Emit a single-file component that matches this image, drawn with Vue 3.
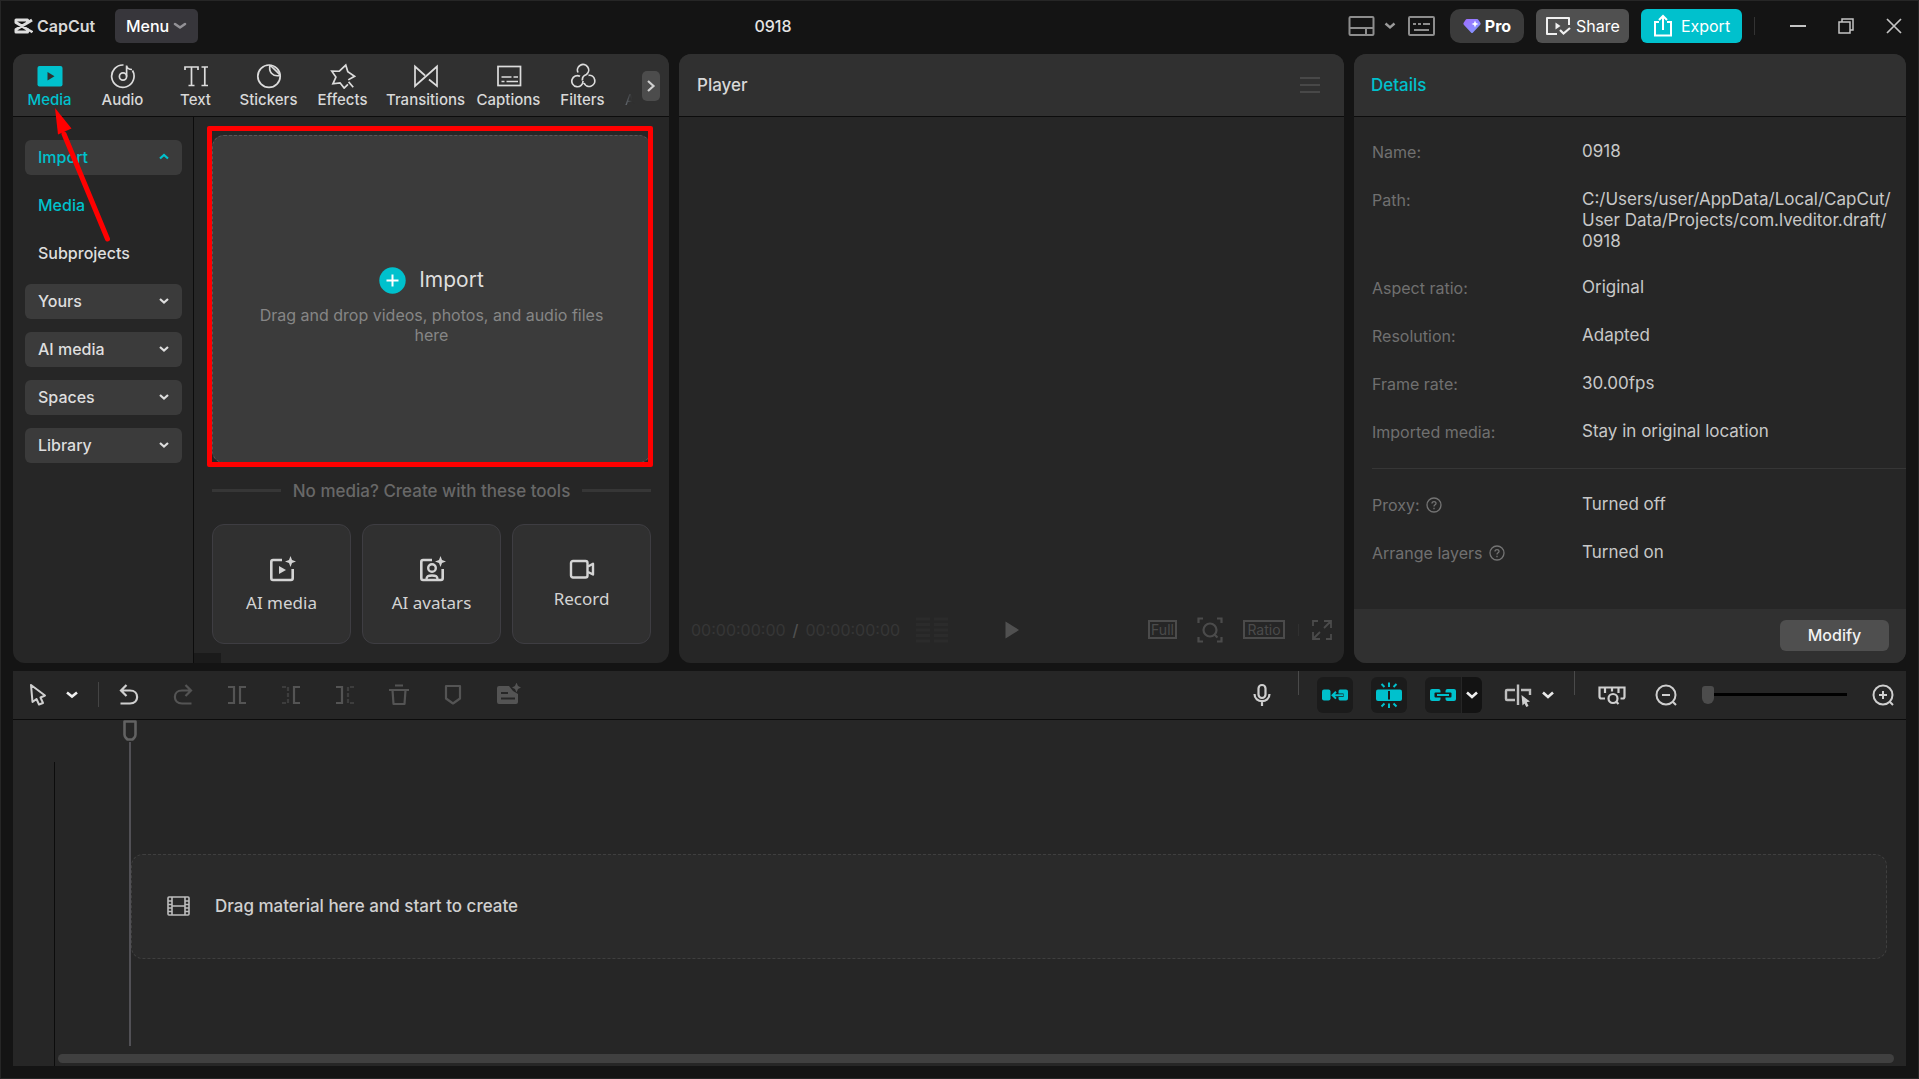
<script setup>
import { ref } from 'vue'

const projectName = '0918'
const activeTab = ref('Media')
const zoomLevel = ref(0)

const tabs = ['Media', 'Audio', 'Text', 'Stickers', 'Effects', 'Transitions', 'Captions', 'Filters']

const sideItems = [
  { label: 'Import', kind: 'group', open: true },
  { label: 'Media', kind: 'link', active: true },
  { label: 'Subprojects', kind: 'link' },
  { label: 'Yours', kind: 'group' },
  { label: 'AI media', kind: 'group' },
  { label: 'Spaces', kind: 'group' },
  { label: 'Library', kind: 'group' }
]

const details = [
  { label: 'Name:', value: '0918' },
  { label: 'Path:', value: 'C:/Users/user/AppData/Local/CapCut/\nUser Data/Projects/com.lveditor.draft/\n0918' },
  { label: 'Aspect ratio:', value: 'Original' },
  { label: 'Resolution:', value: 'Adapted' },
  { label: 'Frame rate:', value: '30.00fps' },
  { label: 'Imported media:', value: 'Stay in original location' }
]

const options = [
  { label: 'Proxy:', value: 'Turned off' },
  { label: 'Arrange layers', value: 'Turned on' }
]
</script>

<template>
  <div class="app">
    <header class="titlebar">
      <div class="brand">
        <svg width="20" height="16" viewBox="0 0 20 16" fill="none" stroke="#dedede" stroke-width="3">
          <path d="M19 2 L15 4.500 L3 11.500 V14 H14.500 V11.500 L3 4.500 V2 H14.500 V4.500" stroke-linejoin="round" />
          <path d="M14 11 L19.500 14.200" stroke-width="2.400" />
        </svg>
        <span>CapCut</span>
      </div>
      <button class="menu-btn">Menu
        <svg width="14" height="8" viewBox="0 0 14 8" fill="none" stroke="#929196" stroke-width="2.600" stroke-linecap="round" stroke-linejoin="round"><path d="M2 2 L7 5.500 L12 2" /></svg>
      </button>
      <h1>{{ projectName }}</h1>
      <div class="title-actions">
        <button class="plain layout-btn" aria-label="Layout">
          <svg width="27" height="22" viewBox="0 0 27 22" fill="none" stroke="#8d8d8d" stroke-width="2"><rect x="1.500" y="2" width="24" height="18" rx="1" /><path d="M1.500 13 H25.500 M18 13 V20" /></svg>
          <svg width="12" height="8" viewBox="0 0 12 8" fill="none" stroke="#9a9a9a" stroke-width="2.400"><path d="M1.500 1.500 L6 5.500 L10.500 1.500" /></svg>
        </button>
        <button class="plain keys-btn" aria-label="Shortcuts">
          <svg width="27" height="22" viewBox="0 0 27 22" fill="none" stroke="#8d8d8d" stroke-width="2"><rect x="1" y="2" width="25" height="18" rx="1" /><path d="M5 9 H8 M10 9 H13 M15 9 H22 M6 15 H21" /></svg>
        </button>
        <button class="pill pro">
          <svg width="18" height="16" viewBox="0 0 18 16">
            <defs><linearGradient id="gem" x1="0" x2="1" y1="0" y2="1"><stop offset="0" stop-color="#a06bff" /><stop offset="1" stop-color="#7f9dff" /></linearGradient></defs>
            <path d="M4 1 H14 Q15 1 15.500 2 L17.500 5 Q18 6 17 7 L10 14.500 Q9 15.500 8 14.500 L1 7 Q0 6 0.500 5 L2.500 2 Q3 1 4 1Z" fill="url(#gem)" />
            <path d="M12 2.500 L13 5 L15.500 6 L13 7 L12 9.500 L11 7 L8.500 6 L11 5Z" fill="#fff" />
          </svg>
          <b>Pro</b>
        </button>
        <button class="pill share">
          <svg width="26" height="20" viewBox="0 0 26 20" fill="none" stroke="#f0f0f0" stroke-width="2"><path d="M12 18 H2 V2 H24 V9" stroke-linejoin="round" /><path d="M10.500 6.500 L15.500 10 L10.500 13.500Z" fill="#f0f0f0" stroke="none" /><path d="M15 14 L18.500 17.500 L25 12" stroke-width="2.200" /></svg>
          Share
        </button>
        <button class="pill export">
          <svg width="20" height="23" viewBox="0 0 20 23" fill="none" stroke="#fff" stroke-width="2"><path d="M6 8 H2 V21.500 H18 V8 H14" /><path d="M10 16 V2.500 M6 6 L10 2 L14 6" /></svg>
          Export
        </button>
        <i class="split"></i>
        <button class="plain win" aria-label="Minimize"><svg width="16" height="16" viewBox="0 0 16 16" stroke="#c4c4c4" stroke-width="2"><path d="M0 8 H16" /></svg></button>
        <button class="plain win" aria-label="Restore"><svg width="16" height="16" viewBox="0 0 16 16" fill="none" stroke="#c4c4c4" stroke-width="1.500"><rect x="1" y="4" width="11" height="11" /><path d="M4 4 V1 H15 V12 H12" /></svg></button>
        <button class="plain win" aria-label="Close"><svg width="16" height="16" viewBox="0 0 16 16" stroke="#c4c4c4" stroke-width="1.700"><path d="M1 1 L15 15 M15 1 L1 15" /></svg></button>
      </div>
    </header>

    <main class="panels">
      <section class="panel library">
        <nav class="tabs">
          <button v-for="tab in tabs" :key="tab" class="tab" :class="[tab.toLowerCase(), { active: tab === activeTab }]" @click="activeTab = tab">
            <svg v-if="tab === 'Media'" width="26" height="26" viewBox="0 0 26 26"><rect x="0.500" y="3" width="25" height="20.500" rx="2" fill="#00c1cd" /><path d="M10.500 9 L17.500 13.200 L10.500 17.500Z" fill="#303030" /></svg>
            <svg v-else-if="tab === 'Audio'" width="26" height="26" viewBox="0 0 26 26" class="line"><path d="M13.500 2 A11.200 11.200 0 1 0 22.500 7.500" /><circle cx="13" cy="13.500" r="3.600" /><path d="M16.600 13.500 V2.500 C17 5.500 19 6.500 22 6.500" /></svg>
            <svg v-else-if="tab === 'Text'" width="26" height="26" viewBox="0 0 26 26" class="line"><path d="M2 7 V4 H15 V7 M8.500 4 V22.500 M5.500 22.500 H11.500 M18.500 4 H25 M21.800 4 V22.500 M18.500 22.500 H25" /></svg>
            <svg v-else-if="tab === 'Stickers'" width="26" height="26" viewBox="0 0 26 26" class="line"><circle cx="13" cy="13.200" r="11.200" /><path d="M14 2 C12.500 8.500 16 14 24 12.500 M14.500 2.500 C18 6 21 8.500 24 12" /></svg>
            <svg v-else-if="tab === 'Effects'" width="26" height="26" viewBox="0 0 26 26" class="line"><path d="M18.500 21 L15 25 L10.500 20 L3.500 21.500 L6 14.500 L1.500 9 L9 8.500 L15 2 L17.500 8.500 L24.500 12.500 L18.500 16.500 M19 18.500 L24 23.500" transform="rotate(4 13 13)" /></svg>
            <svg v-else-if="tab === 'Transitions'" width="26" height="26" viewBox="0 0 26 26" class="line"><path d="M12 12.500 L2 3.500 V23 L24 3.500 V23 L16 16.500" /></svg>
            <svg v-else-if="tab === 'Captions'" width="26" height="26" viewBox="0 0 26 26" class="line"><rect x="2" y="3.500" width="22.500" height="19" /><path d="M5.500 14 H15.500 M17.500 14 H22 M5.500 18.500 H8.500 M10.500 18.500 H22" /></svg>
            <svg v-else width="26" height="26" viewBox="0 0 26 26" class="line"><path d="M8 9.500 A5.600 5.600 0 1 1 16.500 11.500 C13.500 12.500 12 14.500 12.500 17.500 M10 13.200 A5.600 5.600 0 1 0 13 18 M18.500 12.300 A5.600 5.600 0 1 1 14 20" /></svg>
            <span>{{ tab }}</span>
          </button>
          <span class="next-tab">A</span>
          <button class="tabs-next" aria-label="More tabs"><svg width="10" height="14" viewBox="0 0 10 14" fill="none" stroke="#d0d0d0" stroke-width="2.200"><path d="M2 2 L7.500 7 L2 12" /></svg></button>
        </nav>
        <div class="library-body">
          <aside class="side">
            <template v-for="item in sideItems" :key="item.label + item.kind">
              <button v-if="item.kind === 'group'" class="side-row group" :class="{ active: item.open }">
                {{ item.label }}
                <svg width="10" height="8" viewBox="0 0 10 8" fill="none" stroke="currentColor" stroke-width="2.200"><path :d="item.open ? 'M1 5.500 L5 2 L9 5.500' : 'M1 2 L5 5.500 L9 2'" /></svg>
              </button>
              <a v-else href="#" class="side-row" :class="{ active: item.active }">{{ item.label }}</a>
            </template>
          </aside>
          <div class="media-area">
            <div class="dropzone">
              <button class="plain import-btn">
                <svg width="27" height="27" viewBox="0 0 27 27"><circle cx="13.500" cy="13.500" r="13.200" fill="#00c1cd" /><path d="M13.500 7.500 V19.500 M7.500 13.500 H19.500" stroke="#fff" stroke-width="2" /></svg>
                Import
              </button>
              <p>Drag and drop videos, photos, and audio files<br>here</p>
              <div class="highlight"></div>
            </div>
            <div class="or"><i></i><span>No media? Create with these tools</span><i></i></div>
            <div class="cards">
              <button class="card">
                <svg width="28" height="28" viewBox="0 0 28 28" fill="none" stroke="#d4d4d4" stroke-width="2.600"><path d="M14 5 H5 Q3.300 5 3.300 6.700 V23.300 Q3.300 25 5 25 H23 Q24.700 25 24.700 23.300 V14" /><path d="M11 11 L18 15 L11 19Z" fill="#d4d4d4" stroke="none" /><path d="M22.500 1 L24 5 L28 6.500 L24 8 L22.500 12 L21 8 L17 6.500 L21 5Z" fill="#d4d4d4" stroke="none" /></svg>
                AI media
              </button>
              <button class="card">
                <svg width="28" height="28" viewBox="0 0 28 28" fill="none" stroke="#d4d4d4" stroke-width="2.600"><path d="M14 5 H5 Q3.300 5 3.300 6.700 V23.300 Q3.300 25 5 25 H23 Q24.700 25 24.700 23.300 V14" /><circle cx="14" cy="13" r="3.800" stroke-width="2.400" /><path d="M8.500 24.500 C8.500 21 10 20.500 14 20.500 S19.500 21 19.500 24.500" stroke-width="2.400" /><path d="M22.500 1 L24 5 L28 6.500 L24 8 L22.500 12 L21 8 L17 6.500 L21 5Z" fill="#d4d4d4" stroke="none" /></svg>
                AI avatars
              </button>
              <button class="card">
                <svg width="26" height="20" viewBox="0 0 26 20" fill="none" stroke="#d4d4d4" stroke-width="2.400"><rect x="2" y="2" width="16.500" height="16.500" rx="2" /><path d="M19 7.500 L24 4.800 V15.500 L19 13" stroke-linejoin="round" /></svg>
                Record
              </button>
            </div>
            <i class="hscroll"></i>
          </div>
        </div>
        <svg class="arrow" width="64" height="140" viewBox="0 0 64 140"><path d="M59.500 134 L16 29" stroke="#ff0000" stroke-width="5" stroke-linecap="round" /><path d="M7 3 L23.500 23.500 L10 29.500Z" fill="#ff0000" /></svg>
      </section>

      <section class="panel player">
        <header class="panel-head">
          <h2>Player</h2>
          <button class="plain" aria-label="Player menu"><svg width="20" height="18" viewBox="0 0 20 18" stroke="#484848" stroke-width="2"><path d="M0 2 H20 M0 9 H20 M0 16 H20" /></svg></button>
        </header>
        <div class="stage"></div>
        <div class="controls">
          <div class="time">
            <span>00:00:00:00</span><b>/</b><span>00:00:00:00</span>
            <svg width="32" height="26" viewBox="0 0 32 26" stroke="#2b2b2b" stroke-width="3"><path d="M0 2 H14 M18 2 H32 M0 7.500 H14 M18 7.500 H32 M0 13 H14 M18 13 H32 M0 18.500 H14 M18 18.500 H32 M0 24 H14 M18 24 H32" /></svg>
          </div>
          <button class="plain" aria-label="Play"><svg width="14" height="18" viewBox="0 0 14 18"><path d="M0.500 0.500 L14 9 L0.500 17.500Z" fill="#505050" /></svg></button>
          <div class="view">
            <button class="boxed">Full</button>
            <button class="plain" aria-label="Fit"><svg width="26" height="26" viewBox="0 0 26 26" fill="none" stroke="#4b4b4b" stroke-width="2.200"><path d="M1.500 6 V1.500 H6 M20 1.500 H24.500 V6 M24.500 20 V24.500 H20 M6 24.500 H1.500 V20" /><circle cx="13" cy="13" r="6.500" /><path d="M17 17 L20.500 20.500" /></svg></button>
            <button class="boxed ratio">Ratio</button>
            <i></i>
            <button class="plain" aria-label="Full screen"><svg width="20" height="20" viewBox="0 0 20 20" fill="none" stroke="#4b4b4b" stroke-width="1.800"><path d="M1 6 V1 H6 M19 14 V19 H14 M12 1 H19 V8 M19 1 L12 8 M8 19 H1 V12 M1 19 L8 12" /></svg></button>
          </div>
        </div>
      </section>

      <section class="panel details">
        <header class="panel-head"><h2 class="active">Details</h2></header>
        <div class="details-body">
          <dl>
            <div v-for="row in details" :key="row.label"><dt>{{ row.label }}</dt><dd>{{ row.value }}</dd></div>
          </dl>
          <dl class="options">
            <div v-for="row in options" :key="row.label">
              <dt>{{ row.label }}
                <svg width="16" height="16" viewBox="0 0 16 16" fill="none" stroke="#747474" stroke-width="1.300"><circle cx="8" cy="8" r="7" /><path d="M6 6.500 C6 3.800 10.200 4 10 6.500 C9.900 7.800 8 8 8 9.500 M8 10.800 V12.200" /></svg>
              </dt>
              <dd>{{ row.value }}</dd>
            </div>
          </dl>
        </div>
        <footer><button class="modify">Modify</button></footer>
      </section>
    </main>

    <section class="timeline">
      <div class="toolbar">
        <div class="tools">
          <button class="plain select-tool" aria-label="Select">
            <svg width="18" height="24" viewBox="0 0 18 24" fill="none" stroke="#cfcfcf" stroke-width="2" stroke-linejoin="round"><path d="M2 2 L16 12.500 L11.500 14.500 L14 20 L10 21.500 L7.500 16 L3.500 19Z" /></svg>
            <svg width="12" height="8" viewBox="0 0 12 8" fill="none" stroke="#f0f0f0" stroke-width="2.600"><path d="M1 1.500 L6 5.500 L11 1.500" /></svg>
          </button>
          <i></i>
          <button class="plain" aria-label="Undo"><svg width="20" height="24" viewBox="0 0 20 24" fill="none" stroke="#cfcfcf" stroke-width="2.200"><path d="M7.500 2 L2 7.500 L7.500 13 M2 7.500 H11 C20.500 7.500 20.500 20.500 11 20.500 H1.500" /></svg></button>
          <button class="plain off" aria-label="Redo"><svg width="20" height="24" viewBox="0 0 20 24" fill="none" stroke="currentColor" stroke-width="2.200"><path d="M12.500 2 L18 7.500 L12.500 13 M18 7.500 H9 C-0.500 7.500 -0.500 20.500 9 20.500 H18.500" /></svg></button>
          <button class="plain off" aria-label="Split"><svg width="20" height="24" viewBox="0 0 20 24" fill="none" stroke="currentColor" stroke-width="2.200"><path d="M1 4 H7 V20 H1 M19 4 H13 V20 H19" /></svg></button>
          <button class="plain off" aria-label="Delete left"><svg width="20" height="24" viewBox="0 0 20 24" fill="none" stroke="currentColor" stroke-width="2.200"><path d="M1 4 H7 V20 H1" stroke-dasharray="4 2" opacity="0.500" /><path d="M19 4 H13 V20 H19" /></svg></button>
          <button class="plain off" aria-label="Delete right"><svg width="20" height="24" viewBox="0 0 20 24" fill="none" stroke="currentColor" stroke-width="2.200"><path d="M1 4 H7 V20 H1" /><path d="M19 4 H13 V20 H19" stroke-dasharray="4 2" opacity="0.500" /></svg></button>
          <button class="plain off" aria-label="Delete"><svg width="20" height="24" viewBox="0 0 20 24" fill="none" stroke="currentColor" stroke-width="2.200"><path d="M6 2.500 H14 M0 7 H20 M3.500 7 L4.500 21 H15.500 L16.500 7" stroke-linejoin="round" /></svg></button>
          <button class="plain off" aria-label="Marker"><svg width="20" height="24" viewBox="0 0 20 24" fill="none" stroke="currentColor" stroke-width="2.200"><path d="M3 3 H17 V15.500 L10 20.500 L3 15.500Z" stroke-linejoin="round" /></svg></button>
          <button class="plain off" aria-label="Smart edit"><svg width="24" height="24" viewBox="0 0 24 24"><path d="M2 3 H12 L16 8 L21 11 V19 Q21 21 19 21 H2 Q0 21 0 19 V5 Q0 3 2 3Z" fill="currentColor" /><path d="M4 10 H11 M4 15.500 H18" stroke="#262626" stroke-width="2.200" /><path d="M19.500 -0.500 L21 3 L24 4.500 L21 6 L19.500 9.500 L18 6 L15 4.500 L18 3Z" fill="currentColor" /></svg></button>
        </div>
        <div class="tools-right">
          <button class="plain mic" aria-label="Record voice"><svg width="18" height="24" viewBox="0 0 18 24" fill="none" stroke="#cfcfcf" stroke-width="2.200"><rect x="5.500" y="2" width="7" height="13" rx="3.500" /><path d="M1.500 11 C1.500 20.500 16.500 20.500 16.500 11 M9 18 V23" /></svg></button>
          <i class="tick"></i>
          <button class="toggle" aria-label="Main track magnet"><svg width="28" height="24" viewBox="0 0 28 24"><rect x="1" y="6.500" width="8.500" height="11" rx="2" fill="#00c1cd" /><path d="M19 6.500 H25 Q27 6.500 27 8.500 V15.500 Q27 17.500 25 17.500 H19 Q17.500 17.500 17.500 15.500 V14 H22.500 V10.500 H17.500 V8.500 Q17.500 6.500 19 6.500Z" fill="#00c1cd" /><path d="M22 12.200 H11.500 M15 8.800 L11.500 12.200 L15 15.600" fill="none" stroke="#00c1cd" stroke-width="2" /></svg></button>
          <button class="toggle" aria-label="Auto snapping"><svg width="28" height="26" viewBox="0 0 28 26"><rect x="1" y="7.500" width="26" height="11.500" rx="2" fill="#00c1cd" /><path d="M14 9 V17.500" stroke="#1b1b1b" stroke-width="2" /><path d="M14 0.500 V5 M6.500 2 L9.500 5 M21.500 2 L18.500 5 M14 21.500 V26 M6.500 24.500 L9.500 21.500 M21.500 24.500 L18.500 21.500" stroke="#00c1cd" stroke-width="2" /></svg></button>
          <div class="toggle-pair">
            <button class="toggle" aria-label="Linkage"><svg width="28" height="24" viewBox="0 0 28 24"><rect x="1" y="6" width="10.500" height="12" rx="2" fill="#00c1cd" /><rect x="16.500" y="6" width="10.500" height="12" rx="2" fill="#00c1cd" /><rect x="5.500" y="9.500" width="17" height="5" rx="1" fill="#1b1b1b" /><path d="M8 12 H20" stroke="#00c1cd" stroke-width="2" /></svg></button>
            <button class="drop" aria-label="Linkage options"><svg width="12" height="8" viewBox="0 0 12 8" fill="none" stroke="#eee" stroke-width="2.600"><path d="M1 1.500 L6 6 L11 1.500" /></svg></button>
          </div>
          <button class="plain preview" aria-label="Preview axis">
            <svg width="28" height="24" viewBox="0 0 28 24" fill="none" stroke="#bdbdbd" stroke-width="2.400"><path d="M11 7 H3 Q2 7 2 8 V16 Q2 17 3 17 H11 M14 1.500 V22" /><path d="M17 7 H26 V12" /><path d="M17.500 12 L26 18.500 L22.800 19.300 L24.500 23 L22.300 24 L20.500 20.500 L18.500 22.500Z" fill="#cfcfcf" stroke="none" /></svg>
            <svg width="12" height="8" viewBox="0 0 12 8" fill="none" stroke="#e8e8e8" stroke-width="2.600"><path d="M1 1.500 L6 6 L11 1.500" /></svg>
          </button>
          <i class="tick"></i>
          <button class="plain fit" aria-label="Zoom to fit"><svg width="28" height="24" viewBox="0 0 28 24" fill="none" stroke="#cfcfcf" stroke-width="2.200"><path d="M7 15.500 H3.500 Q1.500 15.500 1.500 13.500 V4.500 H26.500 V13.500 Q26.500 15.500 25 15.500 H22.500 M7 5 V10 M14 5 V8.500 M20.500 5 V10" /><circle cx="15" cy="15.500" r="4.500" /><path d="M18 18.500 L20.500 21" /></svg></button>
          <button class="plain" aria-label="Zoom out"><svg width="22" height="24" viewBox="0 0 22 24" fill="none" stroke="#cfcfcf" stroke-width="2"><circle cx="11" cy="12" r="9.500" /><path d="M7 12 H15 M18 19 L21 22" /></svg></button>
          <input v-model="zoomLevel" type="range" min="0" max="100" aria-label="Timeline zoom">
          <button class="plain" aria-label="Zoom in"><svg width="22" height="24" viewBox="0 0 22 24" fill="none" stroke="#cfcfcf" stroke-width="2"><circle cx="11" cy="12" r="9.500" /><path d="M7 12 H15 M11 8 V16 M18 19 L21 22" /></svg></button>
        </div>
      </div>
      <div class="tracks">
        <div class="track-heads"></div>
        <div class="track-area">
          <div class="track-drop">
            <svg width="23" height="20" viewBox="0 0 23 20" fill="none" stroke="#bdbdbd" stroke-width="1.600"><rect x="1" y="1" width="21" height="18" rx="1" /><path d="M5 1 V19 M18 1 V19 M5 10 H18 M1 5 H5 M1 8.500 H5 M1 12 H5 M1 15.500 H5 M18 5 H22 M18 8.500 H22 M18 12 H22 M18 15.500 H22" /></svg>
            <span>Drag material here and start to create</span>
          </div>
          <div class="scrollbar"></div>
        </div>
        <div class="playhead"><svg width="14" height="22" viewBox="0 0 14 22" fill="none" stroke="#626262" stroke-width="2.600"><path d="M1.500 1.500 H12.500 V14.500 Q12.500 16.500 11 18 L9.500 19.500 H4.500 L3 18 Q1.500 16.500 1.500 14.500Z" stroke-linejoin="round" /></svg><i></i></div>
      </div>
    </section>
  </div>
</template>

<style>
body {
  margin: 0;
  background: #141414;
}
</style>

<style scoped>
* {
  box-sizing: border-box;
}
.app {
  display: flex;
  flex-direction: column;
  min-height: 100vh;
  padding: 0 12px 12px;
  border: 1px solid #262626;
  background: #141414;
  color: #d8d8d8;
  font-family: Inter, "Liberation Sans", sans-serif;
  font-size: 16px;
  line-height: 20px;
}
button {
  display: flex;
  align-items: center;
  justify-content: center;
  padding: 0;
  border: 0;
  background: none;
  color: inherit;
  font: inherit;
}
svg {
  display: block;
  flex: none;
}
h1, h2, p, dl, dd {
  margin: 0;
  font-weight: 400;
}
.active {
  color: #00c1cd;
}

/* title bar */
.titlebar {
  display: flex;
  align-items: center;
  height: 53px;
  padding-bottom: 4px;
}
.brand {
  display: flex;
  align-items: center;
  gap: 4px;
  width: 102px;
  font-size: 16px;
  font-weight: 600;
}
.menu-btn {
  gap: 4px;
  width: 83px;
  height: 34px;
  border-radius: 5px;
  background: #37363b;
  color: #fff;
  font-weight: 500;
}
h1 {
  flex: 1;
  color: #e4e4e4;
  font-size: 16px;
  font-weight: 500;
  text-align: center;
}
.title-actions {
  display: flex;
  align-items: center;
  gap: 12px;
}
.layout-btn {
  gap: 9px;
}
.keys-btn {
  margin-right: 3px;
}
.pill {
  height: 34px;
  border-radius: 6px;
  color: #fff;
}
.pro {
  gap: 4px;
  width: 74px;
  border-radius: 10px;
  background: #3b3b3b;
}
.share {
  gap: 5px;
  width: 93px;
  background: #505050;
}
.export {
  gap: 8px;
  width: 101px;
  background: #00c1cd;
}
.split {
  width: 1px;
  height: 18px;
  background: #333;
}
.win {
  width: 36px;
  height: 30px;
}
.split + .win {
  margin-left: 13px;
}
.win:last-child {
  margin-right: -6px;
}

/* panels */
.panels {
  display: grid;
  grid-template-columns: 656fr 665fr 552fr;
  gap: 10px;
  flex: 608 1 0;
}
.panel {
  position: relative;
  display: flex;
  flex-direction: column;
  min-width: 0;
  border-radius: 12px;
  background: #262626;
}
.tabs,
.panel-head {
  display: flex;
  height: 63px;
  border-bottom: 1px solid #0c0c0c;
  border-radius: 12px 12px 0 0;
  background: #303030;
}
.tabs {
  padding-top: 9px;
}
.tab {
  flex-direction: column;
  justify-content: flex-start;
  gap: 1px;
  width: 73px;
  font-size: 15px;
  font-weight: 500;
}
.tab.effects,
.tab.captions {
  width: 75px;
}
.tab.transitions {
  width: 91px;
}
.line {
  fill: none;
  stroke: #dcdcdc;
  stroke-width: 1.700;
}
.next-tab {
  height: 20px;
  margin: 27px auto 0 6px;
  background: linear-gradient(90deg, #6a7078, #303030 70%);
  background-clip: text;
  color: transparent;
  font-size: 15px;
}
.tabs-next {
  width: 18px;
  height: 30px;
  margin: 8px 9px 0 0;
  border-radius: 5px;
  background: #4c4c4c;
}
.library-body {
  display: flex;
  flex: 1;
}
.side {
  display: flex;
  flex-direction: column;
  gap: 13px;
  width: 181px;
  padding: 23px 11px 0 12px;
  border-right: 1px solid #0c0c0c;
}
.side-row {
  display: flex;
  align-items: center;
  justify-content: space-between;
  width: 100%;
  height: 35px;
  padding: 0 13px 2px;
  border-radius: 6px;
  color: #dedede;
  font-weight: 500;
  text-decoration: none;
}
.side-row.active {
  color: #00c1cd;
}
.group {
  background: #3b3b3b;
}
.media-area {
  display: flex;
  flex-direction: column;
  flex: 1;
  padding: 18px 18px 0;
}
.dropzone {
  position: relative;
  display: flex;
  flex: 1;
  flex-direction: column;
  align-items: center;
  justify-content: center;
  min-height: 300px;
  padding-top: 14px;
  border: 1px dashed #575757;
  border-radius: 12px;
  background: #3b3b3b;
  color: #868686;
  text-align: center;
}
.highlight {
  position: absolute;
  inset: -10px -3px -5px -6px;
  border: 5px solid #ff0000;
  border-radius: 2px;
  pointer-events: none;
}
.import-btn {
  gap: 13px;
  margin-bottom: 11px;
  color: #dedede;
  font-size: 21px;
}
.or {
  display: flex;
  align-items: center;
  gap: 12px;
  padding: 18px 0 23px;
  color: #686868;
  font-size: 17px;
  font-weight: 500;
}
.or i {
  flex: 1;
  height: 3px;
  background: #363636;
}
.cards {
  display: grid;
  grid-template-columns: repeat(3, 1fr);
  gap: 11px;
}
.card {
  flex-direction: column;
  gap: 10px;
  height: 120px;
  border: 1px solid #3e3d42;
  border-radius: 12px;
  background: #303030;
  color: #d4d4d4;
  font-family: "Noto Sans", sans-serif;
  font-size: 17px;
}
.hscroll {
  width: 27px;
  height: 10px;
  margin: 9px 0 0 -18px;
  background: #1b1b1b;
}
.arrow {
  position: absolute;
  top: 51px;
  left: 35px;
  pointer-events: none;
}

/* player */
.panel-head {
  align-items: center;
  justify-content: space-between;
  padding: 0 24px 0 18px;
}
.details .panel-head {
  padding-left: 17px;
}
h2 {
  font-size: 17px;
  font-weight: 500;
}
.stage {
  flex: 1;
}
.controls {
  display: grid;
  grid-template-columns: 1fr auto 1fr;
  align-items: center;
  height: 66px;
  padding: 0 12px;
}
.time {
  display: flex;
  align-items: center;
  gap: 7px;
  color: #363636;
}
.time b {
  color: #505050;
  font-weight: 500;
}
.time svg {
  margin-left: 9px;
}
.view {
  display: flex;
  align-items: center;
  justify-content: flex-end;
  gap: 20px;
}
.view i {
  width: 1px;
  height: 12px;
  margin: 0 -7px;
  background: #303030;
}
.boxed {
  width: 29px;
  height: 19px;
  border: 2px solid #4b4b4b;
  color: #4b4b4b;
  font-size: 14px;
}
.ratio {
  width: 42px;
}

/* details */
.details-body {
  flex: 1;
  padding: 24px 0 24px 18px;
}
dl {
  display: flex;
  flex-direction: column;
  gap: 28px;
}
dl > div {
  display: flex;
}
dt {
  display: flex;
  align-items: center;
  gap: 6px;
  width: 210px;
  height: 22px;
  margin-bottom: -2px;
  color: #707070;
  font-size: 16px;
}
dd {
  margin-bottom: -3px;
  color: #c8c8c8;
  font-size: 17px;
  line-height: 21px;
  white-space: pre-line;
}
.options {
  margin-top: 27px;
  padding-top: 25px;
  border-top: 1px solid #363636;
}
footer {
  display: flex;
  align-items: center;
  justify-content: flex-end;
  height: 54px;
  padding-right: 17px;
  border-radius: 0 0 12px 12px;
  background: #303030;
}
.modify {
  width: 109px;
  height: 31px;
  padding-bottom: 2px;
  border-radius: 6px;
  background: #4f4f4f;
  color: #f2f2f2;
  font-weight: 500;
}

/* timeline */
.timeline {
  display: flex;
  flex: 395 1 0;
  flex-direction: column;
  margin-top: 8px;
  background: #262626;
}
.toolbar {
  display: flex;
  justify-content: space-between;
  height: 49px;
  border-bottom: 1px solid #0c0c0c;
}
.tools,
.tools-right {
  display: flex;
  align-items: center;
}
.tools {
  gap: 34px;
  padding-left: 16px;
}
.select-tool {
  gap: 19px;
}
.tools i {
  width: 1px;
  height: 25px;
  margin: 0 -14px;
  background: #444;
}
.off {
  color: #545454;
}
.tools-right {
  padding-right: 12px;
}
.tick {
  align-self: flex-start;
  width: 1px;
  height: 24px;
  background: #4a4a4a;
}
.mic {
  margin-right: 27px;
}
.toggle {
  width: 36px;
  height: 36px;
  margin-left: 18px;
  border-radius: 6px;
  background: #1b1b1b;
}
.toggle-pair {
  display: flex;
  gap: 1px;
  margin-left: 18px;
}
.toggle-pair .toggle {
  margin-left: 0;
  border-radius: 6px 0 0 6px;
}
.drop {
  width: 20px;
  height: 36px;
  border-radius: 0 6px 6px 0;
  background: #131313;
}
.preview {
  gap: 10px;
  margin: 0 20px 0 22px;
}
.fit {
  margin: 0 29px 0 23px;
}
input[type="range"] {
  width: 145px;
  height: 18px;
  margin: 0 25px;
  appearance: none;
  background: linear-gradient(#000, #000) center / 100% 3px no-repeat;
}
input[type="range"]::-webkit-slider-thumb {
  width: 12px;
  height: 18px;
  appearance: none;
  border-radius: 3px 3px 6px 6px;
  background: #4c4c4c;
}
.tracks {
  position: relative;
  display: flex;
  flex: 1;
  min-height: 300px;
}
.track-heads {
  width: 42px;
  margin-top: 42px;
  border-right: 1px solid #0c0c0c;
}
.track-area {
  display: flex;
  flex: 1;
  flex-direction: column;
  justify-content: space-between;
  padding: 134px 12px 3px 3px;
}
.track-drop {
  display: flex;
  align-items: center;
  gap: 25px;
  height: 105px;
  margin: 0 7px 0 73px;
  padding-left: 35px;
  border: 1px dashed #3f3f3f;
  border-radius: 12px;
  background: #2a2a2a;
  color: #d0d0d0;
  font-size: 17px;
  font-weight: 500;
}
.scrollbar {
  height: 9px;
  border-radius: 5px;
  background: #404040;
}
.playhead {
  position: absolute;
  top: 0;
  bottom: 20px;
  left: 110px;
  display: flex;
  flex-direction: column;
  align-items: center;
}
.playhead i {
  flex: 1;
  width: 2px;
  background: #515055;
}
</style>
